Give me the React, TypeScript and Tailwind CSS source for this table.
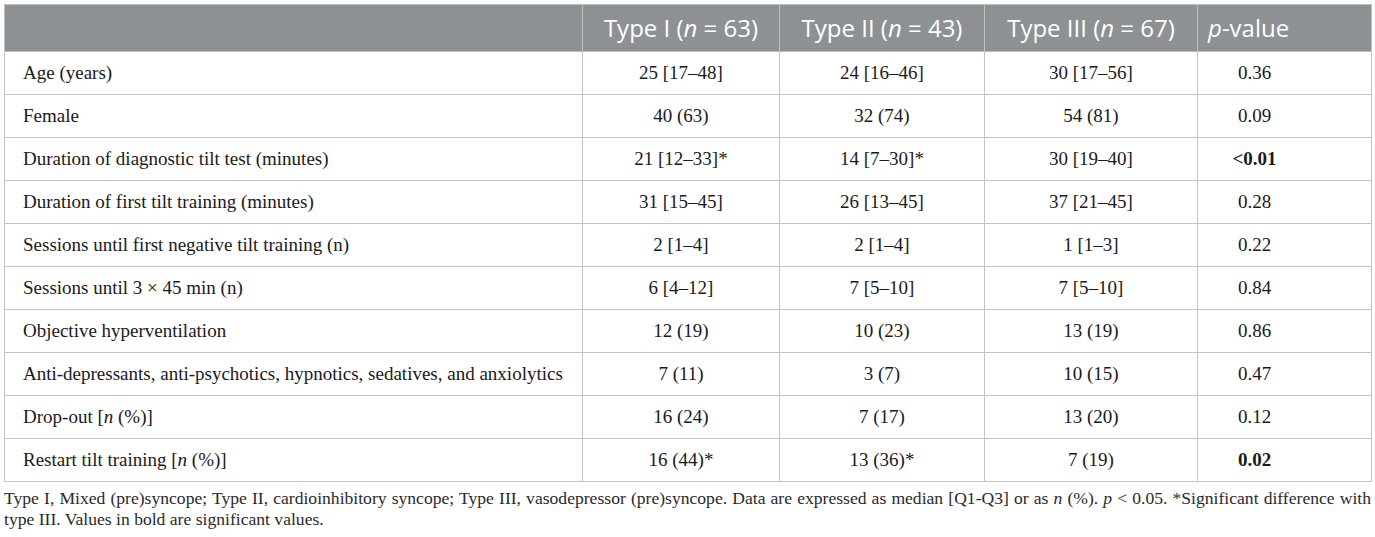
import React from "react";

type Row = {
  label: React.ReactNode;
  t1: string;
  t2: string;
  t3: string;
  p: string;
  bold?: boolean;
};

const rows: Row[] = [
  { label: "Age (years)", t1: "25 [17–48]", t2: "24 [16–46]", t3: "30 [17–56]", p: "0.36" },
  { label: "Female", t1: "40 (63)", t2: "32 (74)", t3: "54 (81)", p: "0.09" },
  { label: "Duration of diagnostic tilt test (minutes)", t1: "21 [12–33]*", t2: "14 [7–30]*", t3: "30 [19–40]", p: "<0.01", bold: true },
  { label: "Duration of first tilt training (minutes)", t1: "31 [15–45]", t2: "26 [13–45]", t3: "37 [21–45]", p: "0.28" },
  { label: "Sessions until first negative tilt training (n)", t1: "2 [1–4]", t2: "2 [1–4]", t3: "1 [1–3]", p: "0.22" },
  { label: "Sessions until 3 × 45 min (n)", t1: "6 [4–12]", t2: "7 [5–10]", t3: "7 [5–10]", p: "0.84" },
  { label: "Objective hyperventilation", t1: "12 (19)", t2: "10 (23)", t3: "13 (19)", p: "0.86" },
  { label: "Anti-depressants, anti-psychotics, hypnotics, sedatives, and anxiolytics", t1: "7 (11)", t2: "3 (7)", t3: "10 (15)", p: "0.47" },
  { label: <>Drop-out [<i>n</i> (%)]</>, t1: "16 (24)", t2: "7 (17)", t3: "13 (20)", p: "0.12" },
  { label: <>Restart tilt training [<i>n</i> (%)]</>, t1: "16 (44)*", t2: "13 (36)*", t3: "7 (19)", p: "0.02", bold: true },
];

export default function App() {
  return (
    <div className="bg-white min-h-[537px] pl-[4px] pt-[4px] text-[#1a1a1a]" style={{ fontFamily: '"Liberation Serif", serif' }}>
      <table className="w-[1367px] border-collapse border border-[#bcc0bc] table-fixed">
        <colgroup>
          <col className="w-[578px]" />
          <col className="w-[197px]" />
          <col className="w-[205px]" />
          <col className="w-[213px]" />
          <col className="w-[174px]" />
        </colgroup>
        <thead>
          <tr className="bg-[#8d9194] text-white text-[24px] h-[47px]" style={{ fontFamily: '"Open Sans", sans-serif' }}>
            <th className="border border-[#bcc0bc]"></th>
            <th className="border border-[#bcc0bc] font-normal text-center whitespace-nowrap">Type I (<i>n</i> = 63)</th>
            <th className="border border-[#bcc0bc] font-normal text-center whitespace-nowrap">Type II (<i>n</i> = 43)</th>
            <th className="border border-[#bcc0bc] font-normal text-center whitespace-nowrap">Type III (<i>n</i> = 67)</th>
            <th className="border border-[#bcc0bc] font-normal text-left pl-[10px]"><i>p</i>-value</th>
          </tr>
        </thead>
        <tbody className="text-[19px]">
          {rows.map((r, i) => (
            <tr key={i} className="h-[43px]">
              <td className="border border-[#c4c4c4] pl-[18px]">{r.label}</td>
              <td className="border border-[#c4c4c4] text-center">{r.t1}</td>
              <td className="border border-[#c4c4c4] text-center">{r.t2}</td>
              <td className="border border-[#c4c4c4] text-center">{r.t3}</td>
              <td className={"border border-[#c4c4c4] text-center pr-[60px] " + (r.bold ? "font-bold" : "")}>{r.p}</td>
            </tr>
          ))}
        </tbody>
      </table>
      <p className="w-[1367px] text-[17.6px] leading-[21px] text-justify mt-[6px] text-[#2a2a2a]">
        Type I, Mixed (pre)syncope; Type II, cardioinhibitory syncope; Type III, vasodepressor (pre)syncope. Data are expressed as median [Q1-Q3] or as <i>n</i> (%). <i>p</i> &lt; 0.05. *Significant difference with type III. Values in bold are significant values.
      </p>
    </div>
  );
}
